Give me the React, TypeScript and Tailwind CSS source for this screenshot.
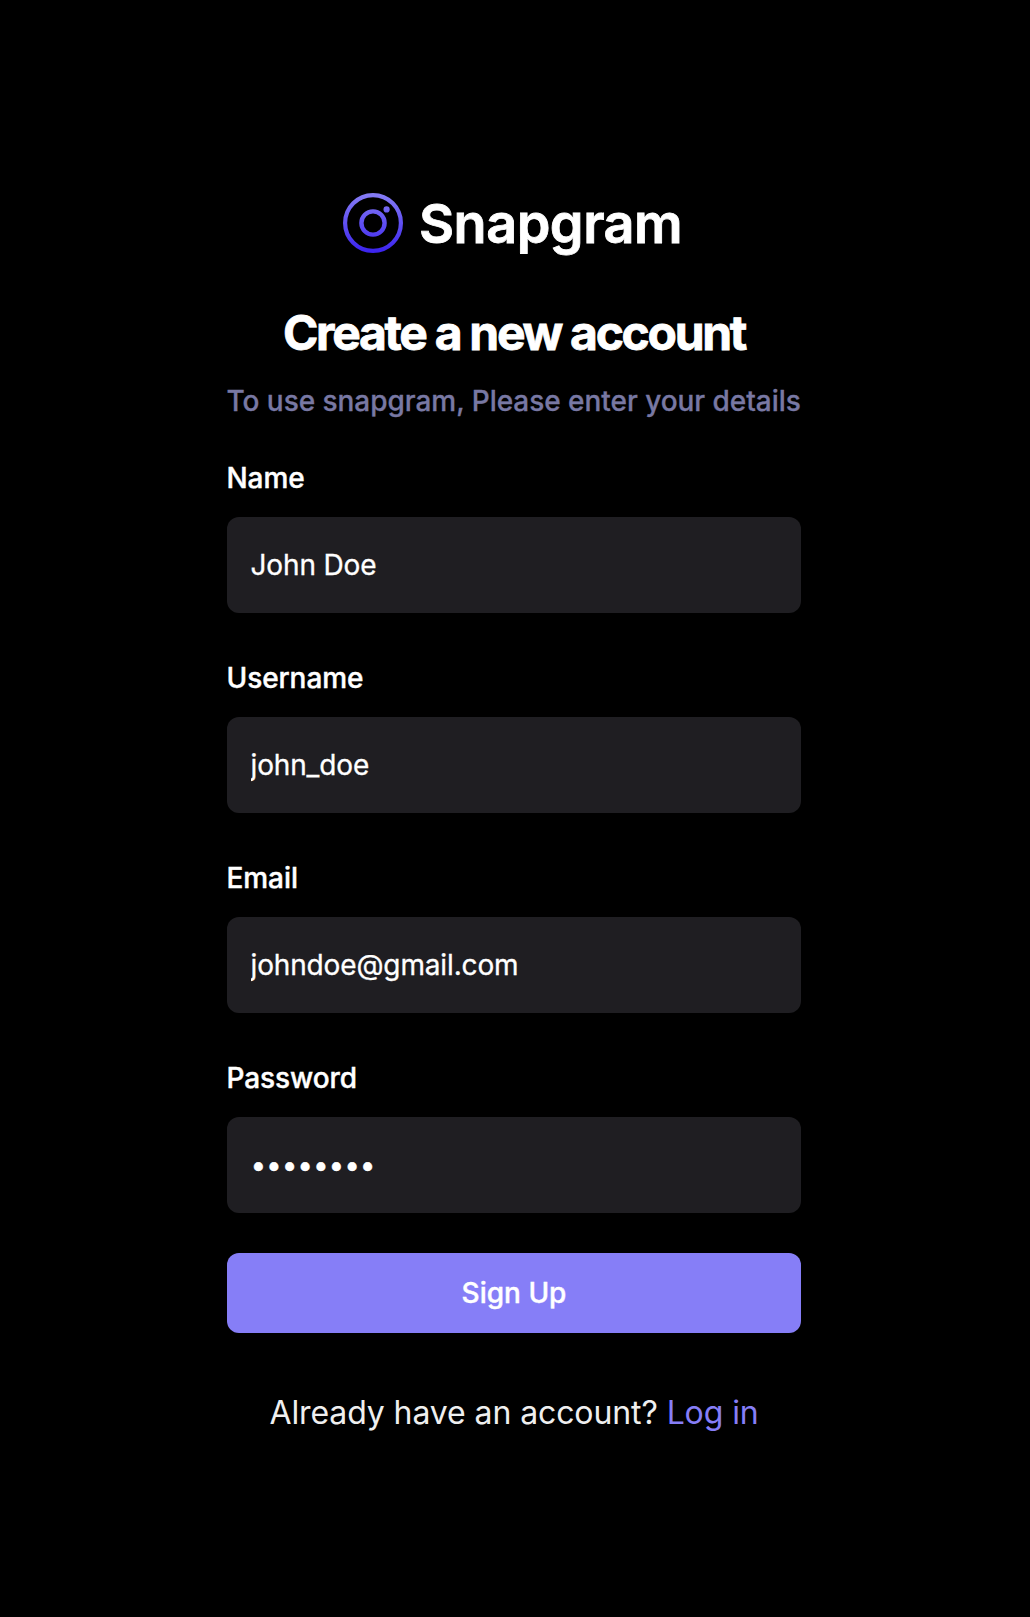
type FieldProps = {
  id: string;
  label: string;
  type: string;
  value: string;
};

function Field({ id, label, type, value }: FieldProps) {
  return (
    <div className="flex flex-col">
      <label
        htmlFor={id}
        className="-ml-[0.5px] text-[28px] leading-7 font-medium tracking-[-0.08px] text-white [-webkit-text-stroke:0.4px_white]"
      >
        {label}
      </label>
      <input
        id={id}
        type={type}
        defaultValue={value}
        className="mt-[25px] h-24 w-full rounded-xl bg-[#1F1E22] px-[23.5px] text-[28px] tracking-[-0.14px] text-white outline-none [-webkit-text-stroke:0.3px_white]"
      />
    </div>
  );
}

function LogoMark() {
  return (
    <svg width="60" height="60" viewBox="0 0 60 60" fill="none" className="shrink-0">
      <defs>
        <linearGradient id="mark" x1="30" y1="0" x2="30" y2="60" gradientUnits="userSpaceOnUse">
          <stop stopColor="#877EF5" />
          <stop offset="1" stopColor="#3A22EE" />
        </linearGradient>
      </defs>
      <circle cx="30" cy="30" r="27.9" stroke="url(#mark)" strokeWidth="4.2" />
      <circle cx="30" cy="30" r="11.6" stroke="url(#mark)" strokeWidth="4.4" />
      <circle cx="43.6" cy="16.4" r="3.1" fill="url(#mark)" />
    </svg>
  );
}

const fields: FieldProps[] = [
  { id: "name", label: "Name", type: "text", value: "John Doe" },
  { id: "username", label: "Username", type: "text", value: "john_doe" },
  { id: "email", label: "Email", type: "text", value: "johndoe@gmail.com" },
  { id: "password", label: "Password", type: "password", value: "password" },
];

export default function App() {
  return (
    <main className="min-h-[1617px] w-full bg-black pt-[193px] font-['Inter',sans-serif]">
      <div className="ml-[227px] flex w-[574px] flex-col">
        <div className="ml-[116px] flex h-[60px] items-center gap-4">
          <LogoMark />
          <span className="pt-[2px] text-[54px] leading-[60px] font-semibold tracking-[-0.5px] whitespace-nowrap text-white [-webkit-text-stroke:0.8px_white]">
            Snapgram
          </span>
        </div>
        <h2 className="mt-[46px] text-center text-5xl leading-[67px] font-bold tracking-[-2.3px] whitespace-nowrap text-white [-webkit-text-stroke:0.8px_white]">
          Create a new account
        </h2>
        <p className="mt-4 -ml-[0.5px] text-[28px] leading-[39px] font-medium tracking-[-0.04px] whitespace-nowrap text-[#7878A3] [-webkit-text-stroke:0.3px_#7878A3]">
          To use snapgram, Please enter your details
        </p>
        <form className="mt-[43px] flex flex-col gap-[51px]">
          {fields.map((field) => (
            <Field key={field.id} {...field} />
          ))}
          <button
            type="button"
            className="-mt-[11px] h-20 w-full rounded-xl bg-[#867EF7] text-[28px] font-medium text-white [-webkit-text-stroke:0.4px_white]"
          >
            Sign Up
          </button>
        </form>
        <p className="mt-14 text-center text-[32px] leading-[48px] tracking-[-0.1px] whitespace-nowrap text-[#EFEFEF]">
          Already have an account? <a className="text-[#867EF7]">Log in</a>
        </p>
      </div>
    </main>
  );
}
